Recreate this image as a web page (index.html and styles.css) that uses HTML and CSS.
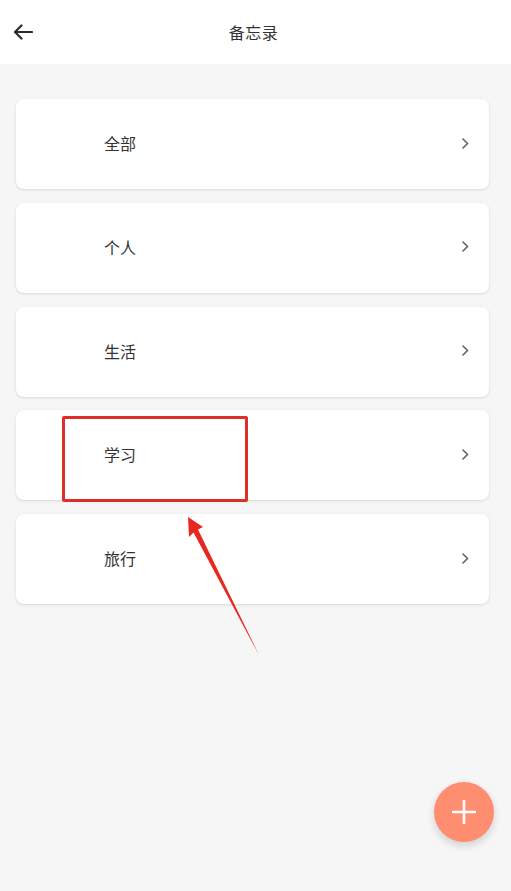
FILE: index.html
```html
<!DOCTYPE html>
<html lang="zh-CN">
<head>
<meta charset="utf-8">
<title>备忘录</title>
<link rel="stylesheet" href="styles.css">
</head>
<body>
<div class="app">
  <header class="topbar">
    <button class="back" aria-label="返回">
      <svg width="20" height="16" viewBox="0 0 20 16"><path d="M19 8H2.5M8.5 1.5L2 8l6.5 6.5" fill="none" stroke="#2b2b2b" stroke-width="2.2" stroke-linecap="round" stroke-linejoin="round"/></svg>
    </button>
    <h1 class="title">备忘录</h1>
  </header>
  <main class="list">
    <div class="card"><span class="label">全部</span><span class="chev"><svg width="8" height="13" viewBox="0 0 8 13"><path d="M1.5 1.5L6.5 6.5L1.5 11.5" fill="none" stroke="#666" stroke-width="1.6"/></svg></span></div>
    <div class="card"><span class="label">个人</span><span class="chev"><svg width="8" height="13" viewBox="0 0 8 13"><path d="M1.5 1.5L6.5 6.5L1.5 11.5" fill="none" stroke="#666" stroke-width="1.6"/></svg></span></div>
    <div class="card"><span class="label">生活</span><span class="chev"><svg width="8" height="13" viewBox="0 0 8 13"><path d="M1.5 1.5L6.5 6.5L1.5 11.5" fill="none" stroke="#666" stroke-width="1.6"/></svg></span></div>
    <div class="card"><span class="label">学习</span><span class="chev"><svg width="8" height="13" viewBox="0 0 8 13"><path d="M1.5 1.5L6.5 6.5L1.5 11.5" fill="none" stroke="#666" stroke-width="1.6"/></svg></span></div>
    <div class="card"><span class="label">旅行</span><span class="chev"><svg width="8" height="13" viewBox="0 0 8 13"><path d="M1.5 1.5L6.5 6.5L1.5 11.5" fill="none" stroke="#666" stroke-width="1.6"/></svg></span></div>
  </main>
  <div class="highlight"></div>
  <svg class="pointer" width="511" height="891" viewBox="0 0 511 891">
    <polygon points="188,517 203,527 198,529.5 259,655 193.5,532.5 189,537" fill="#e8281e"/>
  </svg>
  <button class="fab" aria-label="新建">
    <svg width="26" height="26" viewBox="0 0 26 26"><path d="M13 1V25M1 13H25" stroke="#fff" stroke-width="2.6"/></svg>
  </button>
</div>
</body>
</html>
```
FILE: styles.css
```css
* { box-sizing: border-box; }
html, body { margin: 0; padding: 0; }
body {
  background: #f6f6f6;
  font-family: "Noto Sans CJK SC", "Noto Sans", sans-serif;
  color: #333;
}
.app {
  position: relative;
  width: 511px;
  height: 891px;
  overflow: hidden;
}
.topbar {
  height: 64px;
  background: #fff;
  display: flex;
  align-items: center;
  justify-content: center;
  position: relative;
  padding-right: 4px;
}
.back {
  position: absolute;
  left: 13px;
  top: 23px;
  border: 0;
  background: none;
  padding: 0;
  width: 22px;
  height: 18px;
  display: flex;
  align-items: center;
}
.title {
  margin: 0;
  font-size: 16px;
  font-weight: 400;
  color: #333;
  letter-spacing: 0.5px;
}
.list {
  padding: 35px 22px 0 16px;
  display: flex;
  flex-direction: column;
  gap: 13.75px;
}
.card {
  height: 90px;
  background: #fff;
  border-radius: 8px;
  box-shadow: 0 1px 3px rgba(0, 0, 0, 0.13);
  display: flex;
  align-items: center;
  padding: 0 20px 2px 88px;
}
.label {
  flex: 1;
  font-size: 16px;
  color: #333;
}
.chev {
  display: flex;
  align-items: center;
}
.highlight {
  position: absolute;
  left: 62px;
  top: 416px;
  width: 186px;
  height: 86px;
  border: 3px solid #dd2f28;
  border-radius: 2px;
}
.pointer {
  position: absolute;
  left: 0;
  top: 0;
  pointer-events: none;
}
.fab {
  position: absolute;
  left: 434px;
  top: 782px;
  width: 60px;
  height: 60px;
  border-radius: 50%;
  border: 0;
  background: #ff8e71;
  box-shadow: 0 4px 8px rgba(0, 0, 0, 0.15);
  display: flex;
  align-items: center;
  justify-content: center;
  padding: 0;
}
```
